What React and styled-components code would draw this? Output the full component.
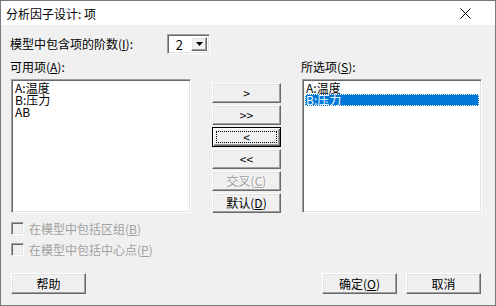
import React from "react";
import styled, { createGlobalStyle, css } from "styled-components";

const Global = createGlobalStyle`
  html, body { margin: 0; padding: 0; background: #f0f0f0; }
  body { font-family: "Noto Sans CJK SC", "Liberation Sans", sans-serif; font-size: 12px; color: #000; }
  * { box-sizing: border-box; }
`;

const Window = styled.div`
  width: 496px;
  height: 306px;
  border: 1px solid #7a7a7a;
  display: flex;
  flex-direction: column;
  background: #f0f0f0;
`;

const TitleBar = styled.div`
  height: 24px;
  background: #fff;
  display: flex;
  align-items: center;
  justify-content: space-between;
  padding: 0 24px 0 5px;
  font-size: 12px;
  flex: none;
`;

const Body = styled.div`
  flex: 1;
  display: flex;
  flex-direction: column;
  padding: 9px 14px 11px 9px;
`;

const OrderRow = styled.div`
  display: flex;
  align-items: center;
  height: 20px;
`;

const OrderLabel = styled.span`
  width: 157px;
  line-height: 20px;
`;

const sunken = css`
  border-style: solid;
  border-width: 1px;
  border-color: #a0a0a0 #fff #fff #a0a0a0;
  box-shadow: inset 1px 1px 0 #696969, inset -1px -1px 0 #e3e3e3;
`;

const raised = css`
  border-style: solid;
  border-width: 1px;
  border-color: #fff #696969 #696969 #fff;
  box-shadow: inset -1px -1px 0 #a0a0a0, inset 1px 1px 0 #e3e3e3;
`;

const Combo = styled.div`
  ${sunken};
  width: 43px;
  height: 20px;
  background: #fff;
  display: flex;
  align-items: stretch;
  padding: 2px;
`;

const ComboValue = styled.span`
  flex: 1;
  text-align: right;
  padding-right: 8px;
  line-height: 15px;
  font-size: 13px;
`;

const ComboButton = styled.span`
  ${raised};
  width: 16px;
  background: #f0f0f0;
  display: flex;
  align-items: center;
  justify-content: center;
`;

const Transfer = styled.div`
  display: grid;
  grid-template-columns: 180px 69px 180px;
  grid-template-rows: 19px 134px;
  column-gap: 21px;
  margin-top: 6px;
  margin-left: 1px;
`;

const ColLabel = styled.div`
  line-height: 14px;
  margin-left: -1px;
`;

const List = styled.div`
  ${sunken};
  background: #fff;
  padding: 2px;
  display: flex;
  flex-direction: column;
`;

const Item = styled.div`
  height: 12px;
  line-height: 12px;
  font-size: 12px;
  padding-left: 1px;
  white-space: nowrap;
  ${(p) =>
    p.$selected &&
    css`
      background: #0078d7;
      color: #fff;
      outline: 1px dotted #fff;
      outline-offset: -1px;
    `}
`;

const ButtonCol = styled.div`
  display: flex;
  flex-direction: column;
  gap: 2px;
  padding-top: 4px;
`;

const Btn = styled.button`
  ${raised};
  background: #f0f0f0;
  font-family: inherit;
  font-size: 12px;
  height: ${(p) => p.$h || 21}px;
  width: ${(p) => (p.$w ? `${p.$w}px` : "100%")};
  padding: 0;
  color: ${(p) => (p.disabled ? "#a0a0a0" : "#000")};
  text-shadow: ${(p) => (p.disabled ? "1px 1px 0 #fff" : "none")};
  position: relative;
  line-height: 1;
  ${(p) =>
    p.$focused &&
    css`
      border: 1px solid #000;
      box-shadow: inset 1px 1px 0 #fff, inset -1px -1px 0 #696969, inset -2px -2px 0 #a0a0a0;
      &::after {
        content: "";
        position: absolute;
        inset: 3px;
        border: 1px dotted #000;
      }
    `}
`;

const Checks = styled.div`
  display: flex;
  flex-direction: column;
  gap: 8px;
  margin-top: 9px;
  margin-left: 1px;
`;

const CheckRow = styled.label`
  display: flex;
  align-items: center;
  gap: 5px;
  color: #a0a0a0;
  height: 13px;
`;

const CheckText = styled.span`
  white-space: nowrap;
`;

const Box = styled.span`
  ${sunken};
  width: 13px;
  height: 13px;
  background: #f0f0f0;
  flex: none;
`;

const Footer = styled.div`
  margin-top: auto;
  display: flex;
  align-items: center;
  gap: 9px;
  margin-left: 1px;
`;

const Spacer = styled.div`
  flex: 1;
`;

export default function App() {
  return (
    <>
      <Global />
      <Window>
        <TitleBar>
          <span>分析因子设计: 项</span>
          <svg width="11" height="11" viewBox="0 0 11 11">
            <path d="M0.5 0.5 L10.5 10.5 M10.5 0.5 L0.5 10.5" stroke="#000" strokeWidth="1" />
          </svg>
        </TitleBar>
        <Body>
          <OrderRow>
            <OrderLabel>
              模型中包含项的阶数(<u>I</u>):
            </OrderLabel>
            <Combo>
              <ComboValue>2</ComboValue>
              <ComboButton>
                <svg width="7" height="4" viewBox="0 0 7 4">
                  <path d="M0 0 H7 L3.5 4 Z" fill="#000" />
                </svg>
              </ComboButton>
            </Combo>
          </OrderRow>
          <Transfer>
            <ColLabel>
              可用项(<u>A</u>):
            </ColLabel>
            <div />
            <ColLabel>
              所选项(<u>S</u>):
            </ColLabel>
            <List>
              <Item>A:温度</Item>
              <Item>B:压力</Item>
              <Item>AB</Item>
            </List>
            <ButtonCol>
              <Btn>&gt;</Btn>
              <Btn>&gt;&gt;</Btn>
              <Btn $focused>&lt;</Btn>
              <Btn>&lt;&lt;</Btn>
              <Btn disabled>
                交叉(<u>C</u>)
              </Btn>
              <Btn>
                默认(<u>D</u>)
              </Btn>
            </ButtonCol>
            <List>
              <Item>A:温度</Item>
              <Item $selected>B:压力</Item>
            </List>
          </Transfer>
          <Checks>
            <CheckRow>
              <Box />
              <CheckText>
                在模型中包括区组(<u>B</u>)
              </CheckText>
            </CheckRow>
            <CheckRow>
              <Box />
              <CheckText>
                在模型中包括中心点(<u>P</u>)
              </CheckText>
            </CheckRow>
          </Checks>
          <Footer>
            <Btn $w={75} $h={21}>帮助</Btn>
            <Spacer />
            <Btn $w={75} $h={21}>
              确定(<u>O</u>)
            </Btn>
            <Btn $w={75} $h={21}>取消</Btn>
          </Footer>
        </Body>
      </Window>
    </>
  );
}
